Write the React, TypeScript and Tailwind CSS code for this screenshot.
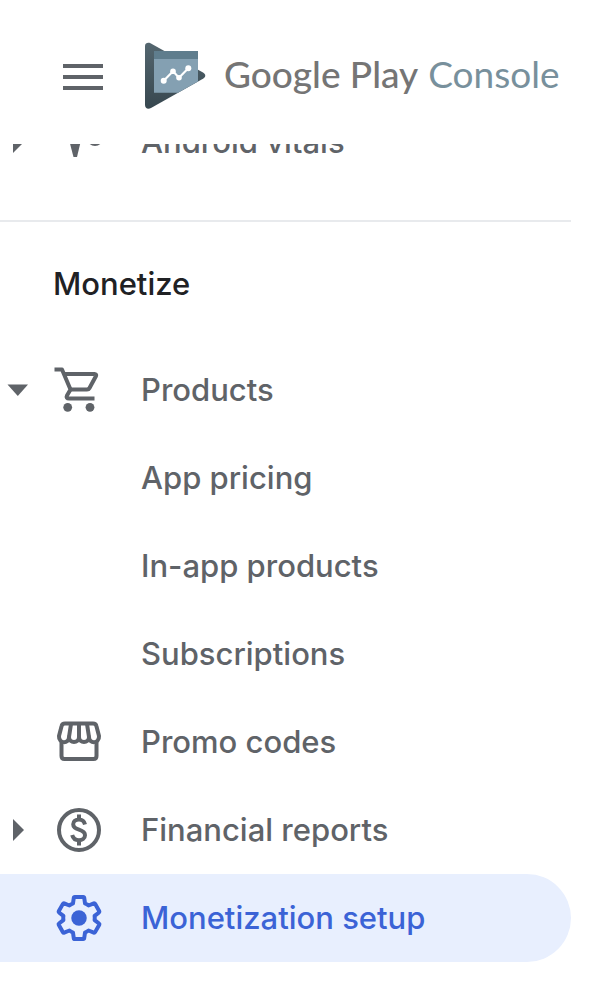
import type { ReactNode } from "react";

function Icon({ children }: { children: ReactNode }) {
  return (
    <svg
      viewBox="0 0 52 52"
      className="size-13 shrink-0"
      fill="none"
      stroke="currentColor"
      strokeWidth="4"
      strokeLinejoin="round"
      aria-hidden="true"
    >
      {children}
    </svg>
  );
}

const VitalsIcon = () => (
  <Icon>
    <path d="M15 20L20.500 41H24L29 20Z" fill="currentColor" stroke="none" />
    <circle cx="42" cy="22" r="6" />
  </Icon>
);

const CartIcon = () => (
  <Icon>
    <path d="M1.500 5.500H9L17.500 25.500L14 31.500C13 33.500 14 34.500 16 34.500H41.500" />
    <path d="M11 10H41.500C43 10 43.500 11 43 12L36.500 24C36 25 35 25.500 34 25.500H17.500" />
    <circle cx="14.700" cy="43.300" r="4.400" fill="currentColor" stroke="none" />
    <circle cx="37" cy="43.300" r="4.400" fill="currentColor" stroke="none" />
  </Icon>
);

const StoreIcon = () => (
  <Icon>
    <path d="M12 7.500H40C42 7.500 43 8.200 43.400 10L46 20C46.500 28 36 28 36 21C36 27.500 26 27.500 26 21C26 27.500 16 27.500 16 21C16 28 5.500 28 6 20L8.600 10C9 8.200 10 7.500 12 7.500Z" />
    <path d="M18 8L16 21M26 8V21M34 8L36 21M8.500 25V40C8.500 42 9.500 43 11.500 43H40.500C42.500 43 43.500 42 43.500 40V25" />
  </Icon>
);

const DollarIcon = () => (
  <Icon>
    <circle cx="26" cy="26" r="20" />
    <path d="M32 20.500C31.300 17.500 29 15.500 26 15.500C22.500 15.500 20.200 17.500 20.200 20.200C20.200 23.500 23 24.700 26 25.700C29.500 26.900 32 28 32 31.200C32 34.300 29 36.200 26 36.200C22.500 36.200 20 34.300 19.200 31M26 10.500V15.500M26 36V41.500" />
  </Icon>
);

const GearIcon = () => (
  <Icon>
    <g transform="translate(26 26) scale(2.1) translate(-12 -12)">
      <path
        strokeWidth="1.9"
        d="M19.430 12.980c.04-.32.07-.64.07-.98 0-.34-.03-.66-.07-.98l2.110-1.650c.19-.15.24-.42.12-.64l-2-3.460c-.09-.16-.26-.25-.44-.25-.06 0-.12.01-.17.03l-2.490 1c-.52-.4-1.080-.73-1.690-.98l-.38-2.650C14.460 2.180 14.250 2 14 2h-4c-.25 0-.46.18-.49.42l-.38 2.650c-.61.25-1.170.59-1.690.98l-2.490-1c-.06-.02-.12-.03-.18-.03-.17 0-.34.09-.43.25l-2 3.460c-.13.22-.07.49.12.64l2.110 1.650c-.04.32-.07.65-.07.98 0 .33.03.66.07.98l-2.110 1.650c-.19.15-.24.42-.12.64l2 3.460c.09.16.26.25.44.25.06 0 .12-.01.17-.03l2.490-1c.52.4 1.080.73 1.690.98l.38 2.650c.03.24.24.42.49.42h4c.25 0 .46-.18.49-.42l.38-2.650c.61-.25 1.170-.59 1.690-.98l2.490 1c.06.02.12.03.18.03.17 0 .34-.09.43-.25l2-3.460c.12-.22.07-.49-.12-.64z"
      />
      <circle cx="12" cy="12" r="3.700" fill="currentColor" stroke="none" />
    </g>
  </Icon>
);

function Arrow({ open }: { open: boolean }) {
  return (
    <svg viewBox="0 0 24 24" className="size-6" fill="currentColor" aria-hidden="true">
      {open ? <path d="M2.500 6.500H23L12.800 18Z" /> : <path d="M8 1L19 12L8 23Z" />}
    </svg>
  );
}

type ItemProps = {
  label: string;
  icon?: ReactNode;
  open?: boolean;
  selected?: boolean;
};

function NavItem({ label, icon, open, selected }: ItemProps) {
  const base = "flex h-22 w-full items-center rounded-r-full pl-[5px] text-left";
  const tone = selected ? "bg-[#e8effe] text-[#3b63d6]" : "text-[#5f6368]";
  const content = (
    <>
      <span className="w-12 shrink-0">{open !== undefined && <Arrow open={open} />}</span>
      <span className="w-13 shrink-0">{icon}</span>
      <span className="pl-9 whitespace-nowrap">{label}</span>
    </>
  );
  return (
    <li>
      {open !== undefined ? (
        <button type="button" aria-expanded={open} className={`${base} ${tone}`}>
          {content}
        </button>
      ) : (
        <a href="#" aria-current={selected ? "page" : undefined} className={`${base} ${tone}`}>
          {content}
        </a>
      )}
    </li>
  );
}

function Logo() {
  return (
    <svg viewBox="144 42 62 68" className="h-17 w-15.5 shrink-0" aria-hidden="true">
      <defs>
        <linearGradient id="play" x1="0" y1="0" x2="0" y2="1">
          <stop offset="0" stopColor="#54666f" />
          <stop offset="1" stopColor="#37474f" />
        </linearGradient>
      </defs>
      <path
        d="M145 46C145 43 148 42 150.500 43.200L203 72.500C206 74.200 206 77 203 78.800L151 108C148 109.500 145 108.500 145 105Z"
        fill="url(#play)"
      />
      <path d="M154 51H198V81.500L178 92.700H154Z" fill="#84a0b2" />
      <path d="M154 51H198V59H154Z" fill="#5f7d8d" />
      <path d="M163.700 80.700L173 71.300L179 77.700L188.300 68.300" fill="none" stroke="#fff" strokeWidth="2.200" />
      <g fill="#fff">
        <circle cx="163.700" cy="80.700" r="3" />
        <circle cx="173" cy="71.300" r="2.800" />
        <circle cx="179" cy="77.700" r="2.800" />
        <circle cx="188.300" cy="68.300" r="3" />
      </g>
    </svg>
  );
}

export default function App() {
  return (
    <div className="min-h-screen bg-white pb-7 font-['Inter',sans-serif] text-[31px] leading-10 font-medium">
      <header className="flex h-36 items-center pt-2 pl-15">
        <button type="button" aria-label="Menu" className="w-11 shrink-0 text-[#5f6368]">
          <svg viewBox="0 0 44 30" className="h-7.5 w-11" stroke="currentColor" strokeWidth="4" aria-hidden="true">
            <path d="M3 5H43M3 16H43M3 27H43" />
          </svg>
        </button>
        <a href="#" className="ml-10 flex items-center font-['Lato',sans-serif] text-[37px] whitespace-nowrap">
          <Logo />
          <span className="ml-4.5 pb-1 font-medium text-[#757575]">Google Play</span>
          <span className="ml-2.5 pb-1 font-normal text-[#78909c]">Console</span>
        </a>
      </header>
      <nav aria-label="Console" className="mr-5.5">
        <ul className="flex h-10.5 flex-col justify-end overflow-hidden">
          <NavItem label="Android vitals" icon={<VitalsIcon />} open={false} />
        </ul>
        <hr className="mt-8.5 border-t-2 border-[#e8eaed]" />
        <h2 className="flex h-31 items-center pl-[53px] text-[#202124]">Monetize</h2>
        <ul>
          <NavItem label="Products" icon={<CartIcon />} open />
          <NavItem label="App pricing" />
          <NavItem label="In-app products" />
          <NavItem label="Subscriptions" />
          <NavItem label="Promo codes" icon={<StoreIcon />} />
          <NavItem label="Financial reports" icon={<DollarIcon />} open={false} />
          <NavItem label="Monetization setup" icon={<GearIcon />} selected />
        </ul>
      </nav>
    </div>
  );
}
